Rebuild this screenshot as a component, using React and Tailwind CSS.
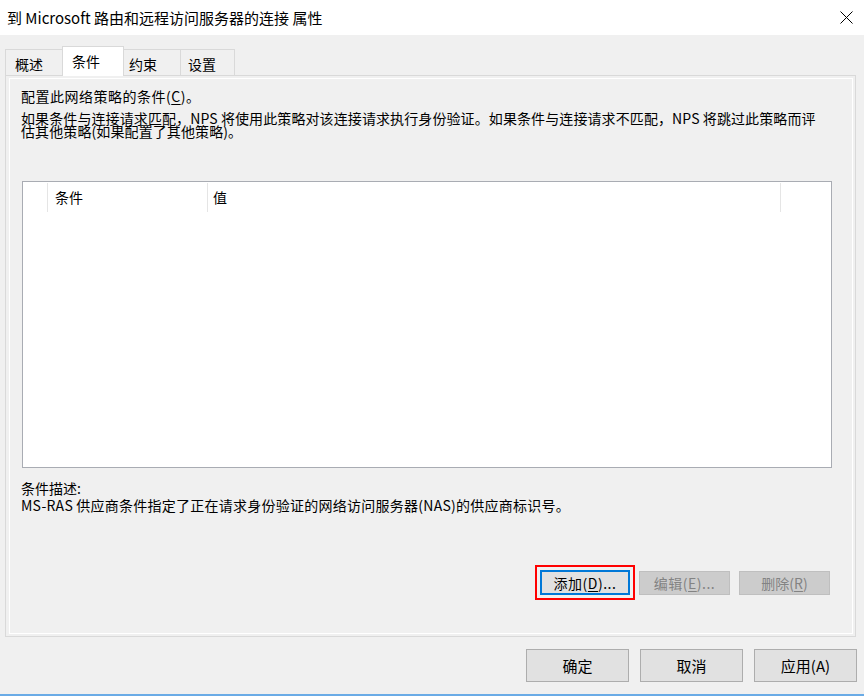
import React from "react";

function U({ children }) {
  return <span className="underline underline-offset-2 decoration-1">{children}</span>;
}

export default function App() {
  return (
    <div
      className="w-[864px] h-[696px] bg-[#f0f0f0] flex flex-col text-black overflow-hidden font-['Noto_Sans_CJK_SC','Noto_Sans',sans-serif]"
    >
      {/* title bar */}
      <div className="h-[35px] bg-white flex items-center pl-[7px] shrink-0">
        <div className="text-[15px] leading-[20px] flex-1 whitespace-nowrap">
          到 Microsoft 路由和远程访问服务器的连接 属性
        </div>
        <svg width="13" height="13" viewBox="0 0 13 13" className="mr-[11px]">
          <path d="M0.5 0.5 L12.5 12.5 M12.5 0.5 L0.5 12.5" stroke="#000" strokeWidth="1" fill="none" />
        </svg>
      </div>

      {/* tabs */}
      <div className="pt-[11px] pl-[5px] pr-[8px] shrink-0">
        <div className="flex items-end text-[14px] leading-[16px]">
          <div className="w-[57px] h-[26px] border-t border-l border-[#d9d9d9] bg-[#f0f0f0] flex items-center pl-[9px] pt-[2px]">
            概述
          </div>
          <div className="relative z-10 w-[62px] h-[30px] -mb-px border-t border-l border-r border-[#d9d9d9] bg-white flex items-center pl-[9px] pb-[1px]">
            条件
          </div>
          <div className="w-[56px] h-[26px] border-t border-[#d9d9d9] bg-[#f0f0f0] flex items-center pl-[5px] pt-[2px]">
            约束
          </div>
          <div className="w-[55px] h-[26px] border-t border-l border-r border-[#d9d9d9] bg-[#f0f0f0] flex items-center pl-[7px] pt-[2px]">
            设置
          </div>
        </div>

        {/* panel */}
        <div className="h-[562px] border border-[#d9d9d9] pt-[2px] pr-[2px] pb-[2px] pl-[3px]">
          <div className="h-full border border-white flex flex-col pl-[11px] pr-[20px]">
            <div className="mt-[9px] text-[14px] leading-[16px] whitespace-nowrap tracking-[0.5px]">
              配置此网络策略的条件(<U>C</U>)。
            </div>
            <div className="mt-[8px] text-[14px] leading-[13px] whitespace-nowrap tracking-[0.1px]">
              如果条件与连接请求匹配，NPS 将使用此策略对该连接请求执行身份验证。如果条件与连接请求不匹配，NPS 将跳过此策略而评
              <br />
              估其他策略(如果配置了其他策略)。
            </div>

            {/* list view */}
            <div className="mt-[43px] ml-[1px] h-[287px] border border-[#a9acb3] bg-white">
              <div className="flex h-[30px] pt-[1px] text-[14px] leading-[16px]">
                <div className="w-[25px] border-r border-[#e5e5e5]" />
                <div className="w-[160px] border-r border-[#e5e5e5] flex items-center pl-[7px] pb-[2px]">
                  条件
                </div>
                <div className="w-[573px] border-r border-[#e5e5e5] flex items-center pl-[5px] pb-[2px]">
                  值
                </div>
                <div className="flex-1" />
              </div>
            </div>

            <div className="mt-[12px] text-[14px] leading-[17px] whitespace-nowrap">条件描述:</div>
            <div className="text-[14px] leading-[17px] whitespace-nowrap tracking-[0.25px]">
              MS-RAS 供应商条件指定了正在请求身份验证的网络访问服务器(NAS)的供应商标识号。
            </div>

            {/* action buttons */}
            <div className="mt-[51px] flex items-center justify-end pr-[2px] text-[14px] leading-[16px]">
              <div className="border-2 border-[#ff0000] px-[3px] py-[3px]">
                <div className="w-[90px] h-[25px] border-2 border-[#0078d7] bg-[#e1e1e1] flex items-center justify-center whitespace-nowrap tracking-[0.5px]">
                  添加(<U>D</U>)...
                </div>
              </div>
              <div className="ml-[4px] w-[91px] h-[24px] border border-[#bfbfbf] bg-[#cccccc] text-[#838383] flex items-center justify-center whitespace-nowrap tracking-[0.5px]">
                编辑(<U>E</U>)...
              </div>
              <div className="ml-[9px] w-[91px] h-[24px] border border-[#bfbfbf] bg-[#cccccc] text-[#838383] flex items-center justify-center whitespace-nowrap">
                删除(<U>R</U>)
              </div>
            </div>
          </div>
        </div>
      </div>

      {/* dialog buttons */}
      <div className="mt-[12px] flex justify-end gap-[11px] pr-[7px] shrink-0 text-[15px] leading-[18px]">
        <div className="w-[103px] h-[33px] border border-[#adadad] bg-[#e1e1e1] flex items-center justify-center">确定</div>
        <div className="w-[103px] h-[33px] border border-[#adadad] bg-[#e1e1e1] flex items-center justify-center">取消</div>
        <div className="w-[103px] h-[33px] border border-[#adadad] bg-[#e1e1e1] flex items-center justify-center">应用(A)</div>
      </div>

      <div className="flex-1" />
      <div className="h-[2px] bg-[#6aabe6] shrink-0" />
    </div>
  );
}
